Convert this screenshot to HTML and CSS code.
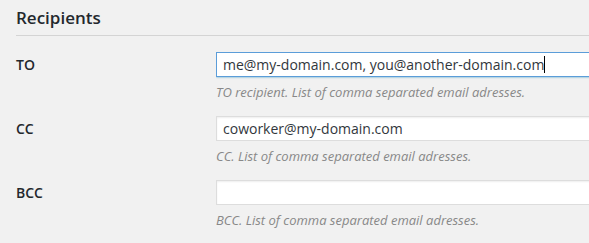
FILE: index.html
```html
<!DOCTYPE html>
<html lang="en">
<head>
    <meta charset="UTF-8">
    <title>Recipients</title>
    <link rel="stylesheet" href="styles.css">
</head>
<body>
    <div class="wrap">
        <h3 class="section-title">Recipients</h3>
        <div class="form-table">
            <div class="row">
                <label class="field-label" for="to">TO</label>
                <div class="field">
                    <div class="input focused" id="to">me@my-domain.com, you@another-domain.com<span class="caret"></span></div>
                    <p class="description">TO recipient. List of comma separated email adresses.</p>
                </div>
            </div>
            <div class="row">
                <label class="field-label" for="cc">CC</label>
                <div class="field">
                    <div class="input" id="cc">coworker@my-domain.com</div>
                    <p class="description">CC. List of comma separated email adresses.</p>
                </div>
            </div>
            <div class="row">
                <label class="field-label" for="bcc">BCC</label>
                <div class="field">
                    <div class="input" id="bcc"></div>
                    <p class="description">BCC. List of comma separated email adresses.</p>
                </div>
            </div>
        </div>
    </div>
</body>
</html>
```

FILE: styles.css
```css
html,body {margin:0;padding:0;}
body {background:#f1f1f1;color:#23282d;font:14px/1.4 "Open Sans","Liberation Sans",sans-serif;}

.wrap {padding:0 0 0 16px;overflow:hidden;}

.section-title {margin:0;padding:8px 0 7px;font-size:17px;line-height:20px;font-weight:600;color:#23282d;border-bottom:1px solid #d4d4d4;}

.form-table {display:flex;flex-direction:column;padding-top:16px;}
.row {display:grid;grid-template-columns:200px 1fr;height:64px;}

.field-label {font-weight:600;line-height:25px;color:#23282d;}

.field {display:flex;flex-direction:column;min-width:0;overflow:hidden;}
.input {box-sizing:border-box;width:420px;flex:none;height:25px;padding:0 6px;background:#fff;border:1px solid #ddd;box-shadow:inset 0 1px 2px rgba(0,0,0,.07);color:#32373c;line-height:23px;white-space:nowrap;}
.input.focused {border-color:#5b9dd9;box-shadow:0 0 2px rgba(30,140,190,.8);}
.caret {display:inline-block;width:1px;height:17px;background:#000;vertical-align:-3px;}

.description {margin:6px 0 0;font-size:13px;line-height:18px;font-style:italic;color:#888;white-space:nowrap;}
```
